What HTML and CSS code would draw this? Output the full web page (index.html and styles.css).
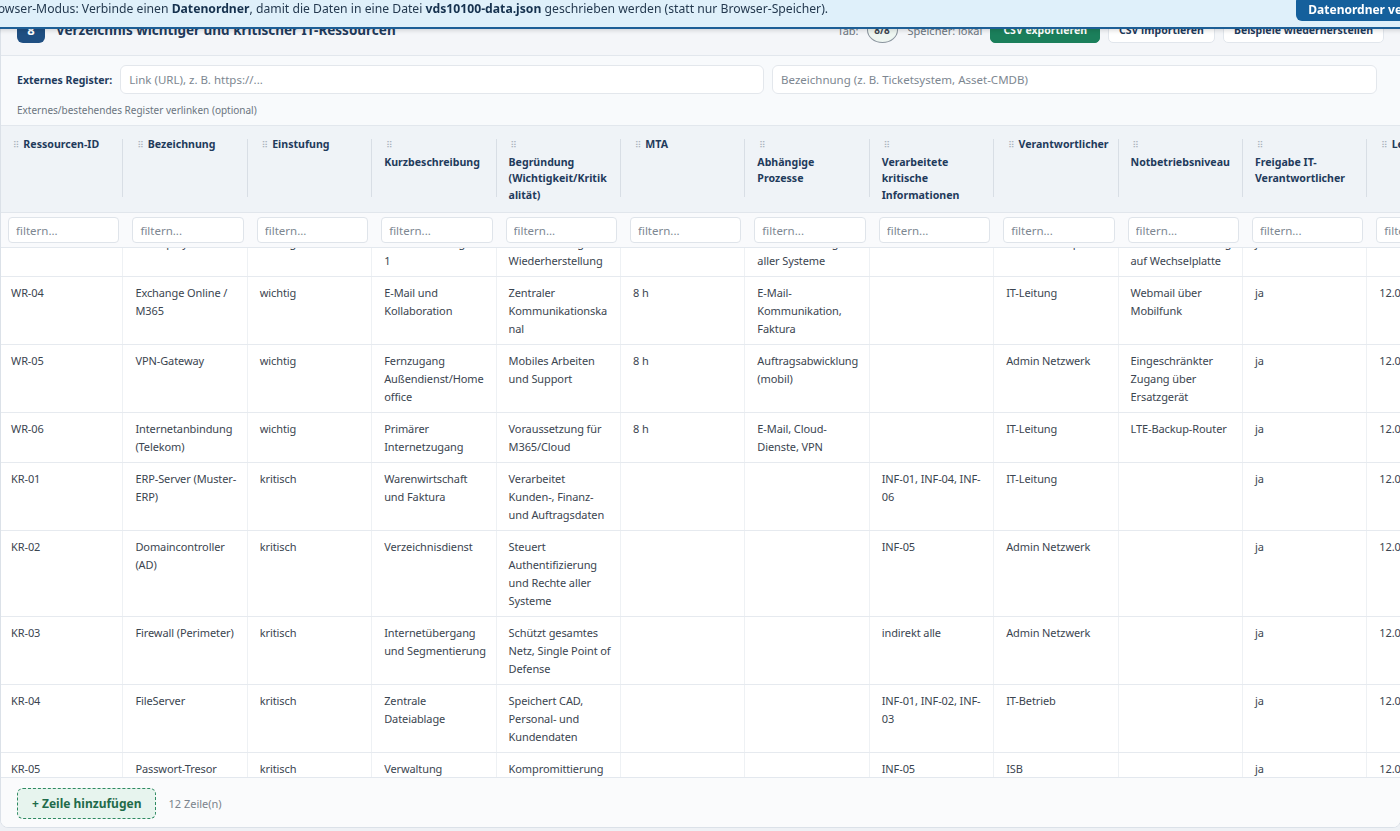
FILE: index.html
```html
<!DOCTYPE html>
<html lang="de">
<head>
    <meta charset="UTF-8">
    <meta name="viewport" content="width=device-width, initial-scale=1.0">
    <title>IT-Ressourcen</title>
    <link rel="stylesheet" href="styles.css">
</head>
<body>

<!-- Hinweis Browser-Modus -->
<div class="banner">
    <span class="banner-text">Browser-Modus: Verbinde einen <b>Datenordner</b>, damit die Daten in eine Datei <b>vds10100-data.json</b> geschrieben werden (statt nur Browser-Speicher).</span>
    <button class="banner-btn">Datenordner verbinden</button>
</div>

<main class="page">
<section class="card">

    <header class="card-head">
        <div class="title">
            <span class="badge">8</span>
            <h2>Verzeichnis wichtiger und kritischer IT-Ressourcen</h2>
        </div>
        <div class="actions">
            <span class="muted">Tab:</span>
            <span class="pill">8/8</span>
            <span class="muted">Speicher: lokal</span>
            <button class="btn btn-green">CSV exportieren</button>
            <button class="btn">CSV importieren</button>
            <button class="btn">Beispiele wiederherstellen</button>
        </div>
    </header>

    <!-- externes Register -->
    <div class="register">
        <div class="register-row">
            <label class="register-label">Externes Register:</label>
            <input type="text" class="field" placeholder="Link (URL), z. B. https://...">
            <input type="text" class="field" placeholder="Bezeichnung (z. B. Ticketsystem, Asset-CMDB)">
        </div>
        <p class="hint">Externes/bestehendes Register verlinken (optional)</p>
    </div>

    <div class="table-wrap">
        <div class="grid thead">
            <div class="th"><span class="grip">⠿</span> <span class="th-label">Ressourcen-ID</span></div>
            <div class="th"><span class="grip">⠿</span> <span class="th-label">Bezeichnung</span></div>
            <div class="th"><span class="grip">⠿</span> <span class="th-label">Einstufung</span></div>
            <div class="th"><span class="grip">⠿</span> <span class="th-label">Kurzbeschreibung</span></div>
            <div class="th"><span class="grip">⠿</span> <span class="th-label">Begründung (Wichtigkeit/Kritikalität)</span></div>
            <div class="th"><span class="grip">⠿</span> <span class="th-label">MTA</span></div>
            <div class="th"><span class="grip">⠿</span> <span class="th-label">Abhängige Prozesse</span></div>
            <div class="th"><span class="grip">⠿</span> <span class="th-label">Verarbeitete kritische Informationen</span></div>
            <div class="th"><span class="grip">⠿</span> <span class="th-label">Verantwortlicher</span></div>
            <div class="th"><span class="grip">⠿</span> <span class="th-label">Notbetriebsniveau</span></div>
            <div class="th"><span class="grip">⠿</span> <span class="th-label">Freigabe IT-Verantwortlicher</span></div>
            <div class="th"><span class="grip">⠿</span> <span class="th-label">Letzte Prüfung</span></div>
        </div>

        <div class="grid filters">
            <div class="fc"><input class="filter" placeholder="filtern..."></div>
            <div class="fc"><input class="filter" placeholder="filtern..."></div>
            <div class="fc"><input class="filter" placeholder="filtern..."></div>
            <div class="fc"><input class="filter" placeholder="filtern..."></div>
            <div class="fc"><input class="filter" placeholder="filtern..."></div>
            <div class="fc"><input class="filter" placeholder="filtern..."></div>
            <div class="fc"><input class="filter" placeholder="filtern..."></div>
            <div class="fc"><input class="filter" placeholder="filtern..."></div>
            <div class="fc"><input class="filter" placeholder="filtern..."></div>
            <div class="fc"><input class="filter" placeholder="filtern..."></div>
            <div class="fc"><input class="filter" placeholder="filtern..."></div>
            <div class="fc"><input class="filter" placeholder="filtern..."></div>
        </div>

        <!-- Tabellenkörper (gescrollt) -->
        <div class="tbody-scroll">
            <div class="tbody">
                <div class="grid row">
                    <div class="td">WR-03</div><div class="td">Backup-System</div><div class="td">wichtig</div>
                    <div class="td">Datensicherung 3-2-1</div><div class="td">Voraussetzung für Wiederherstellung</div><div class="td">8 h</div>
                    <div class="td">Datensicherung aller Systeme</div><div class="td"></div><div class="td">Admin Backup</div>
                    <div class="td">Manuelle Sicherung auf Wechselplatte</div><div class="td">ja</div><div class="td">12.03.2025</div>
                </div>
                <div class="grid row">
                    <div class="td">WR-04</div><div class="td">Exchange Online / M365</div><div class="td">wichtig</div>
                    <div class="td">E-Mail und Kollaboration</div><div class="td">Zentraler Kommunikationskanal</div><div class="td">8 h</div>
                    <div class="td">E-Mail-Kommunikation, Faktura</div><div class="td"></div><div class="td">IT-Leitung</div>
                    <div class="td">Webmail über Mobilfunk</div><div class="td">ja</div><div class="td">12.03.2025</div>
                </div>
                <div class="grid row">
                    <div class="td">WR-05</div><div class="td">VPN-Gateway</div><div class="td">wichtig</div>
                    <div class="td">Fernzugang Außendienst/Homeoffice</div><div class="td">Mobiles Arbeiten und Support</div><div class="td">8 h</div>
                    <div class="td">Auftragsabwicklung (mobil)</div><div class="td"></div><div class="td">Admin Netzwerk</div>
                    <div class="td">Eingeschränkter Zugang über Ersatzgerät</div><div class="td">ja</div><div class="td">12.03.2025</div>
                </div>
                <div class="grid row">
                    <div class="td">WR-06</div><div class="td">Internetanbindung (Telekom)</div><div class="td">wichtig</div>
                    <div class="td">Primärer Internetzugang</div><div class="td">Voraussetzung für M365/Cloud</div><div class="td">8 h</div>
                    <div class="td">E-Mail, Cloud-Dienste, VPN</div><div class="td"></div><div class="td">IT-Leitung</div>
                    <div class="td">LTE-Backup-Router</div><div class="td">ja</div><div class="td">12.03.2025</div>
                </div>
                <div class="grid row">
                    <div class="td">KR-01</div><div class="td">ERP-Server (Muster-ERP)</div><div class="td">kritisch</div>
                    <div class="td">Warenwirtschaft und Faktura</div><div class="td">Verarbeitet Kunden-, Finanz- und Auftragsdaten</div><div class="td"></div>
                    <div class="td"></div><div class="td">INF-01, INF-04, INF-06</div><div class="td">IT-Leitung</div>
                    <div class="td"></div><div class="td">ja</div><div class="td">12.03.2025</div>
                </div>
                <div class="grid row">
                    <div class="td">KR-02</div><div class="td">Domaincontroller (AD)</div><div class="td">kritisch</div>
                    <div class="td">Verzeichnisdienst</div><div class="td">Steuert Authentifizierung und Rechte aller Systeme</div><div class="td"></div>
                    <div class="td"></div><div class="td">INF-05</div><div class="td">Admin Netzwerk</div>
                    <div class="td"></div><div class="td">ja</div><div class="td">12.03.2025</div>
                </div>
                <div class="grid row">
                    <div class="td">KR-03</div><div class="td">Firewall (Perimeter)</div><div class="td">kritisch</div>
                    <div class="td">Internetübergang und Segmentierung</div><div class="td">Schützt gesamtes Netz, Single Point of Defense</div><div class="td"></div>
                    <div class="td"></div><div class="td">indirekt alle</div><div class="td">Admin Netzwerk</div>
                    <div class="td"></div><div class="td">ja</div><div class="td">12.03.2025</div>
                </div>
                <div class="grid row">
                    <div class="td">KR-04</div><div class="td">FileServer</div><div class="td">kritisch</div>
                    <div class="td">Zentrale Dateiablage</div><div class="td">Speichert CAD, Personal- und Kundendaten</div><div class="td"></div>
                    <div class="td"></div><div class="td">INF-01, INF-02, INF-03</div><div class="td">IT-Betrieb</div>
                    <div class="td"></div><div class="td">ja</div><div class="td">12.03.2025</div>
                </div>
                <div class="grid row">
                    <div class="td">KR-05</div><div class="td">Passwort-Tresor</div><div class="td">kritisch</div>
                    <div class="td">Verwaltung privilegierter Zugänge</div><div class="td">Kompromittierung gefährdet alle Systeme</div><div class="td"></div>
                    <div class="td"></div><div class="td">INF-05</div><div class="td">ISB</div>
                    <div class="td"></div><div class="td">ja</div><div class="td">12.03.2025</div>
                </div>
            </div>
        </div>
    </div>

    <footer class="card-foot">
        <button class="add-btn">+ Zeile hinzufügen</button>
        <span class="count">12 Zeile(n)</span>
    </footer>

</section>
</main>

</body>
</html>
```

FILE: styles.css
```css
/* Grundlayout */
body {
    margin: 0;
    font-family: "Noto Sans", "Open Sans", sans-serif;
    background: #eef1f5;
    color: #3b4550;
    overflow: hidden;
}

/* Hinweisleiste oben */
.banner {
    position: fixed;
    top: 0;
    left: -27px;
    width: 1500px;
    height: 29px;
    box-sizing: border-box;
    padding: 0 12px;
    display: flex;
    justify-content: space-between;
    align-items: flex-start;
    background: #dff0fa;
    border-bottom: 2px solid #1d5f96;
    box-shadow: 0 2px 4px rgba(0, 0, 0, 0.12);
    font-size: 12.2px;
    line-height: 18px;
    color: #24394f;
    white-space: nowrap;
    z-index: 10;
}

.banner b {
    color: #16324f;
}

.banner-btn {
    margin-top: -5px;
    height: 26px;
    padding: 3px 12px 0;
    border: none;
    border-radius: 6px;
    background: #15609c;
    color: #fff;
    font-family: inherit;
    font-size: 12px;
    font-weight: bold;
}

.page {
    padding: 5px 0 0 0;
}

.card {
    width: 1401px;
    height: 823px;
    box-sizing: border-box;
    display: flex;
    flex-direction: column;
    background: #fff;
    border: 1px solid #dbe1e8;
    border-radius: 8px;
    overflow: hidden;
}

/* Kopf der Karte */
.card-head {
    display: flex;
    justify-content: space-between;
    align-items: center;
    padding: 11px 16px 12px 16px;
    background: #f4f6f9;
    border-bottom: 1px solid #e2e7ed;
}

.title {
    display: flex;
    align-items: center;
    gap: 11px;
}

.badge {
    width: 28px;
    height: 26px;
    border-radius: 6px;
    background: #1f4f82;
    color: #fff;
    font-weight: bold;
    font-size: 13px;
    display: flex;
    align-items: center;
    justify-content: center;
}

.title h2 {
    margin: 0;
    font-size: 13.5px;
    color: #1f3b5c;
}

.actions {
    display: flex;
    align-items: center;
    gap: 8px;
}

.muted {
    font-size: 11px;
    color: #6b7580;
}

.pill {
    width: 31px;
    height: 26px;
    box-sizing: border-box;
    border: 1px solid #8a949e;
    border-radius: 50%;
    background: #eef6f1;
    font-size: 10px;
    font-weight: bold;
    display: flex;
    align-items: center;
    justify-content: center;
    margin-right: 2px;
}

.btn {
    height: 26px;
    padding: 0 10px;
    border: 1px solid #e1e6ec;
    border-radius: 5px;
    background: #fff;
    color: #1f3b5c;
    font-family: inherit;
    font-size: 10.5px;
    font-weight: bold;
    white-space: nowrap;
}

.btn-green {
    padding: 0 12px;
    background: #1b7f5b;
    border-color: #1b7f5b;
    color: #fff;
}

/* externes Register */
.register {
    padding: 9px 23px 8px 16px;
    background: #f8fafc;
    border-bottom: 1px solid #e2e7ed;
}

.register-row {
    display: grid;
    grid-template-columns: auto 645fr 606fr;
    align-items: center;
    gap: 8px;
}

.register-label {
    font-size: 10.5px;
    font-weight: bold;
    color: #1f3b5c;
}

.field {
    height: 29px;
    box-sizing: border-box;
    padding: 0 8px;
    border: 1px solid #e3e7ec;
    border-radius: 6px;
    background: #fff;
    font-family: inherit;
    font-size: 11.5px;
}

.field::placeholder, .filter::placeholder {
    color: #7d8791;
}

.hint {
    margin: 9px 0 0 0;
    font-size: 10px;
    line-height: 14px;
    color: #6b7580;
}

/* Tabelle */
.table-wrap {
    flex: 1;
    overflow: hidden;
    display: flex;
    flex-direction: column;
}

.grid {
    display: grid;
    grid-template-columns: repeat(12, 124.4px);
    margin-left: -2px;
}

.thead {
    background: #eff3f7;
}

.th {
    position: relative;
    padding: 10px 8px 9px 12px;
    font-size: 10.6px;
    line-height: 16.5px;
    font-weight: bold;
    color: #1f3b5c;
}

.th::after {
    content: "";
    position: absolute;
    right: 0;
    top: 13px;
    bottom: 15px;
    width: 1px;
    background: #d8dee5;
}

.grip {
    font-family: "DejaVu Sans", sans-serif;
    font-weight: normal;
    font-size: 9px;
    color: #a9b2bc;
    margin: 0 1px 0 2px;
}

.th-label {
    display: inline-block;
    overflow-wrap: anywhere;
}

.filters {
    background: #f9fafc;
    border-top: 1px solid #e1e6ec;
    border-bottom: 1px solid #e3e8ee;
}

.fc {
    padding: 4px 4px 4px 9px;
}

.filter {
    width: 100%;
    height: 26px;
    box-sizing: border-box;
    padding: 0 7px;
    border: 1px solid #dfe4ea;
    border-radius: 4px;
    background: #fff;
    font-family: inherit;
    font-size: 11.5px;
}

.tbody-scroll {
    flex: 1;
    overflow: hidden;
}

.tbody {
    margin-top: -21px;
}

.row {
    border-bottom: 1px solid #e6eaef;
}

.td {
    padding: 7px 8px 6px 12px;
    border-right: 1px solid #eef1f4;
    font-size: 11px;
    letter-spacing: -0.1px;
    line-height: 18px;
    color: #3b4550;
    overflow-wrap: anywhere;
}

/* Fußzeile */
.card-foot {
    display: flex;
    align-items: center;
    gap: 12px;
    padding: 10px 16px 8px 16px;
    background: #fafbfc;
    border-top: 1px solid #e3e8ee;
}

.add-btn {
    height: 31px;
    padding: 0 14px;
    border: 1px dashed #2f8a62;
    border-radius: 6px;
    background: #e7f4ee;
    color: #1f6b4a;
    font-family: inherit;
    font-size: 12px;
    font-weight: bold;
    white-space: nowrap;
}

.count {
    font-size: 11px;
    color: #7a838c;
}
```
